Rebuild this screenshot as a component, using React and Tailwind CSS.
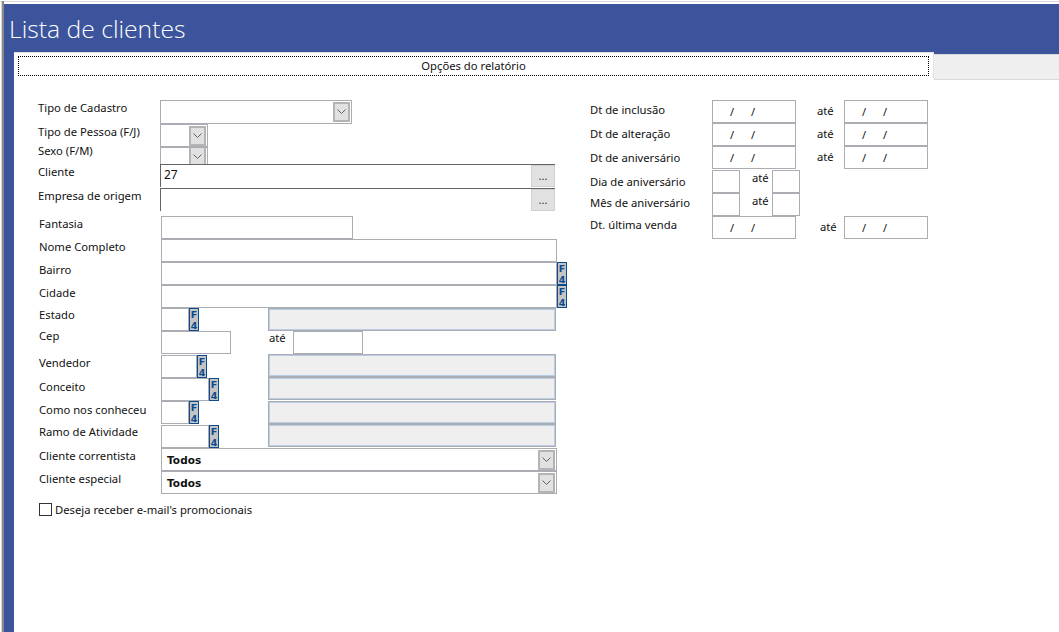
import React from 'react';

const Chevron = () => (
    <svg width="9" height="6" viewBox="0 0 9 6" fill="none" stroke="#606060" strokeWidth="1">
        <path d="M0.5 0.5 L4.5 4.5 L8.5 0.5" />
    </svg>
);

const Arrow = ({ className = '' }) => (
    <div className={`shrink-0 w-[17px] bg-[#e1e1e1] border-2 border-[#b4b4b4] flex items-center justify-center ${className}`}>
        <Chevron />
    </div>
);

const F4 = () => (
    <div className="shrink-0 w-[10px] h-[23px] box-border bg-[#c4c4c4] border border-[#0b4a8e] flex flex-col items-center font-['DejaVu_Sans',sans-serif] font-bold text-[9.5px] leading-[11px] text-[#0b4a8e] overflow-hidden">
        <span className="h-[11px] shrink-0">F</span>
        <span className="h-[11px] shrink-0 -mt-[0.5px]">4</span>
    </div>
);

const Box = ({ className = '', children }) => (
    <div className={`h-[23px] box-border border border-[#abadb3] bg-white shrink-0 ${className}`}>{children}</div>
);

const GreyBox = ({ className = '' }) => (
    <div className={`absolute left-[229px] w-[288px] h-[23px] box-border border border-[#abadb3] bg-[#efefef] outline outline-1 -outline-offset-2 outline-[#b7cde6] ${className}`} />
);

// linha do formulario: rotulo a esquerda, campos depois
const Row = ({ label, labelClass = '', h = 'h-[23px]', children }) => (
    <div className={`flex relative ${h}`}>
        <div className={`w-[122px] shrink-0 whitespace-nowrap h-4 ${labelClass}`}>{label}</div>
        {children}
    </div>
);

const Combo = ({ text }) => (
    <Box className="w-[396px] flex items-center justify-between pl-[5px] pr-[1px]">
        <span className="font-bold font-['DejaVu_Sans',sans-serif] text-[10.5px] tracking-[0.1px]">{text}</span>
        <Arrow className="h-[20px]" />
    </Box>
);

const Lookup = ({ value }) => (
    <div className="w-[395px] h-[23px] box-border border-t border-l border-[#646464] bg-white flex justify-between">
        <span className="pl-[3px] pt-[2px] text-[12px]">{value}</span>
        <div className="w-[24px] bg-[#e1e1e1] border border-[#d0d0d0] flex items-center justify-center text-[11px] leading-none pb-[1px] text-[#333]">...</div>
    </div>
);

const DateBox = () => (
    <Box className="w-[84px] flex items-center text-[11px] pl-[17px] gap-[17px]">
        <span>/</span>
        <span>/</span>
    </Box>
);

const DateRow = ({ label, labelClass, ateClass = 'w-[48px] pl-[21px]', h = 'h-[23px]' }) => (
    <div className={`flex ${h}`}>
        <div className={`w-[122px] shrink-0 whitespace-nowrap h-4 ${labelClass}`}>{label}</div>
        <DateBox />
        <div className={`${ateClass} shrink-0 pt-[3px]`}>até</div>
        <DateBox />
    </div>
);

const SmallRow = ({ label, labelClass }) => (
    <div className="flex h-[23px]">
        <div className={`w-[122px] shrink-0 whitespace-nowrap h-4 ${labelClass}`}>{label}</div>
        <Box className="w-[28px]" />
        <div className="w-[32px] shrink-0 pl-[12px]">até</div>
        <Box className="w-[28px]" />
    </div>
);

export default function App() {
    return (
        <div className="w-[1059px] h-[632px] overflow-hidden bg-white flex flex-col pt-[4px] pl-[4px] relative font-['Noto_Sans',sans-serif] text-[11.25px] leading-4 text-[#111]">
            <div className="absolute left-0 top-[1px] right-0 h-[1px] bg-[#d9d9d9]" />
            <div className="absolute left-[1px] top-[1px] bottom-0 w-[3px] bg-[#8a8a8a] border-l border-[#d9d9d9]" />

            <div className="h-[50px] shrink-0 bg-[#3b549c] pl-[5px] pt-[8px] text-white font-['Open_Sans',sans-serif] font-light text-[24.7px] leading-[34px]">
                Lista de clientes
            </div>

            <div className="flex flex-1 min-h-0">
                <div className="w-[10px] shrink-0 bg-[#3b549c]" />
                <div className="flex-1 min-w-0 flex flex-col">
                    <div className="flex h-[26px] shrink-0">
                        <div className="relative z-10 -mt-[2px] w-[920px] h-[27px] shrink-0 bg-white border-t border-r border-[#e3e3e3] pl-[4px] pr-[4px] pt-[3px]">
                            <div className="h-[20px] border border-dotted border-black flex items-center justify-center">Opções do relatório</div>
                        </div>
                        <div className="flex-1 bg-[#efefef] border-t border-b border-[#d9d9d9]" />
                    </div>

                    <div className="flex pl-[24px] pt-[20px]">
                        <div className="w-[552px] shrink-0">
                            <Row label="Tipo de Cadastro" h="h-[24px]">
                                <Box className="w-[192px] h-[24px] flex justify-end pr-[1px] pt-[1px]">
                                    <Arrow className="h-[20px]" />
                                </Box>
                            </Row>
                            <Row label="Tipo de Pessoa (F/J)">
                                <Box className="w-[48px] flex justify-end pr-[1px] pt-[1px]">
                                    <Arrow className="h-[20px]" />
                                </Box>
                            </Row>
                            <Row label="Sexo (F/M)" labelClass="-mt-[4px]" h="h-[17px]">
                                <div className="w-[48px] h-[17px] box-border border-t border-x border-[#abadb3] flex justify-end pr-[1px] overflow-hidden">
                                    <Arrow className="h-[20px] border-t-0" />
                                </div>
                            </Row>
                            <Row label="Cliente" h="h-[24px]"><Lookup value="27" /></Row>
                            <Row label="Empresa de origem"><Lookup /></Row>

                            <div className="pl-[1px] pt-[5px]">
                                <Row label="Fantasia"><Box className="w-[192px]" /></Row>
                                <Row label="Nome Completo"><Box className="w-[396px]" /></Row>
                                <Row label="Bairro"><Box className="w-[396px]" /><F4 /></Row>
                                <Row label="Cidade"><Box className="w-[396px]" /><F4 /></Row>
                                <Row label="Estado" labelClass="-mt-[1px]">
                                    <Box className="w-[28px]" /><F4 />
                                    <GreyBox className="top-0" />
                                </Row>
                                <Row label="Cep" labelClass="-mt-[3px]" h="h-[24px]">
                                    <Box className="w-[70px]" />
                                    <div className="w-[62px] pl-[38px] shrink-0 -mt-[1px]">até</div>
                                    <Box className="w-[70px]" />
                                </Row>
                                <Row label="Vendedor">
                                    <Box className="w-[36px]" /><F4 />
                                    <GreyBox className="-top-[1px]" />
                                </Row>
                                <Row label="Conceito" labelClass="mt-[1px]">
                                    <Box className="w-[48px]" /><F4 />
                                    <GreyBox className="-top-[1px]" />
                                </Row>
                                <Row label="Como nos conheceu" labelClass="mt-[1px]" h="h-[24px]">
                                    <Box className="w-[28px]" /><F4 />
                                    <GreyBox className="top-0" />
                                </Row>
                                <Row label="Ramo de Atividade" labelClass="-mt-[1px]">
                                    <Box className="w-[48px]" /><F4 />
                                    <GreyBox className="-top-[1px]" />
                                </Row>
                                <Row label="Cliente correntista"><Combo text="Todos" /></Row>
                                <Row label="Cliente especial"><Combo text="Todos" /></Row>
                                <label className="flex items-center mt-[9px] h-[13px] gap-[3px]">
                                    <span className="w-[13px] h-[13px] box-border border border-[#333] bg-white shrink-0" />
                                    <span className="whitespace-nowrap">Deseja receber e-mail's promocionais</span>
                                </label>
                            </div>
                        </div>

                        <div className="w-[340px] shrink-0">
                            <DateRow label="Dt de inclusão" labelClass="mt-[2px]" />
                            <DateRow label="Dt de alteração" labelClass="mt-[3px]" />
                            <DateRow label="Dt de aniversário" labelClass="mt-[4px]" h="h-[24px]" />
                            <SmallRow label="Dia de aniversário" labelClass="mt-[4px]" />
                            <SmallRow label="Mês de aniversário" labelClass="mt-[2px]" />
                            <DateRow label="Dt. última venda" labelClass="mt-[1px]" ateClass="w-[48px] pl-[24px]" />
                        </div>
                    </div>
                </div>
            </div>
        </div>
    );
}
